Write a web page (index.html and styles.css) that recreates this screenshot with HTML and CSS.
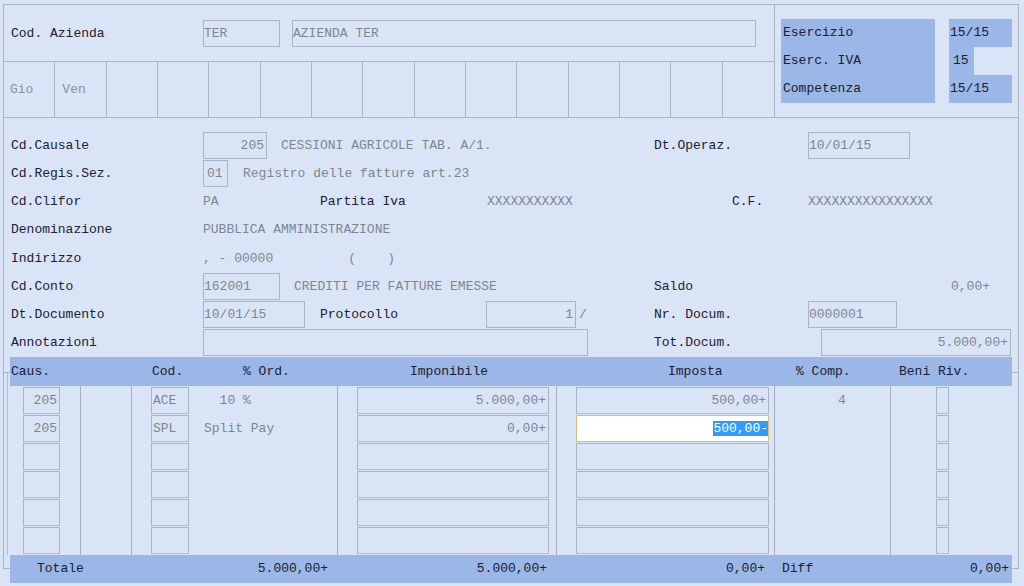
FILE: index.html
```html
<!DOCTYPE html>
<html lang="it">
<head>
<meta charset="utf-8">
<title>Registrazione</title>
<link rel="stylesheet" href="styles.css">
</head>
<body>
<div class="panel">
  <div class="top">
    <div class="top-left">
      <div class="az-row">
        <span class="lbl az-lbl">Cod. Azienda</span>
        <span class="field f-ter">TER</span>
        <span class="field f-azname">AZIENDA TER</span>
      </div>
      <div class="days">
        <div class="day">Gio</div><div class="day">Ven</div><div class="day"></div><div class="day"></div><div class="day"></div><div class="day"></div><div class="day"></div><div class="day"></div><div class="day"></div><div class="day"></div><div class="day"></div><div class="day"></div><div class="day"></div><div class="day"></div><div class="day"></div>
      </div>
    </div>
    <div class="top-right">
      <div class="es-grid">
        <div class="es-lbl">Esercizio</div><div class="es-val"><span class="vb">15/15</span></div>
        <div class="es-lbl">Eserc. IVA</div><div class="es-val"><span class="vb short">15</span></div>
        <div class="es-lbl">Competenza</div><div class="es-val"><span class="vb">15/15</span></div>
      </div>
    </div>
  </div>

  <div class="form">
    <!-- row 1 -->
    <div class="lbl">Cd.Causale</div>
    <div class="span3 line"><span class="field r w64">205</span><span class="val ml14">CESSIONI AGRICOLE TAB. A/1.</span></div>
    <div class="lbl span2">Dt.Operaz.</div>
    <div class="line"><span class="field w102">10/01/15</span></div>
    <!-- row 2 -->
    <div class="lbl">Cd.Regis.Sez.</div>
    <div class="span6 line"><span class="field w25">01</span><span class="val ml15">Registro delle fatture art.23</span></div>
    <!-- row 3 -->
    <div class="lbl">Cd.Clifor</div>
    <div class="val">PA</div>
    <div class="lbl">Partita Iva</div>
    <div class="val">XXXXXXXXXXX</div>
    <div></div>
    <div class="lbl">C.F.</div>
    <div class="val">XXXXXXXXXXXXXXXX</div>
    <!-- row 4 -->
    <div class="lbl">Denominazione</div>
    <div class="span6 val">PUBBLICA AMMINISTRAZIONE</div>
    <!-- row 5 -->
    <div class="lbl">Indirizzo</div>
    <div class="span6 val line"><span>, - 00000</span><span class="paren">(    )</span></div>
    <!-- row 6 -->
    <div class="lbl">Cd.Conto</div>
    <div class="span3 line"><span class="field w77">162001</span><span class="val ml14">CREDITI PER FATTURE EMESSE</span></div>
    <div class="lbl">Saldo</div>
    <div class="span2 val saldo">0,00+</div>
    <!-- row 7 -->
    <div class="lbl">Dt.Documento</div>
    <div class="line"><span class="field w102">10/01/15</span></div>
    <div class="lbl">Protocollo</div>
    <div class="line prot"><span class="field r w90">1</span><span class="val slash">/</span></div>
    <div class="lbl span2">Nr. Docum.</div>
    <div class="line"><span class="field w89">0000001</span></div>
    <!-- row 8 -->
    <div class="lbl">Annotazioni</div>
    <div class="span3 line"><span class="field w385"></span></div>
    <div class="lbl span2">Tot.Docum.</div>
    <div class="line"><span class="field r w190 ml13">5.000,00+</span></div>
  </div>

  <div class="table">
    <div class="thead">
      <span class="h-caus">Caus.</span>
      <span class="h-cod">Cod.</span>
      <span class="h-ord">% Ord.</span>
      <span class="h-imp">Imponibile</span>
      <span class="h-iva">Imposta</span>
      <span class="h-comp">% Comp.</span>
      <span class="h-beni">Beni Riv.</span>
    </div>
    <div class="tbody">
      <div class="col c1">
        <div class="cell r">205</div>
        <div class="cell r">205</div>
        <div class="cell"></div>
        <div class="cell"></div>
        <div class="cell"></div>
        <div class="cell"></div>
      </div>
      <div class="col c2"></div>
      <div class="col c3">
        <div class="slot"><div class="cell cod">ACE</div><span class="val ord">  10 %</span></div>
        <div class="slot"><div class="cell cod">SPL</div><span class="val ord">Split Pay</span></div>
        <div class="slot"><div class="cell cod"></div></div>
        <div class="slot"><div class="cell cod"></div></div>
        <div class="slot"><div class="cell cod"></div></div>
        <div class="slot"><div class="cell cod"></div></div>
      </div>
      <div class="col c4">
        <div class="cell r">5.000,00+</div>
        <div class="cell r">0,00+</div>
        <div class="cell"></div>
        <div class="cell"></div>
        <div class="cell"></div>
        <div class="cell"></div>
      </div>
      <div class="col c5">
        <div class="cell r">500,00+</div>
        <div class="cell r focus"><span class="sel">500,00-</span></div>
        <div class="cell"></div>
        <div class="cell"></div>
        <div class="cell"></div>
        <div class="cell"></div>
      </div>
      <div class="col c6">
        <div class="slot"><span class="val comp">4</span></div>
      </div>
      <div class="col c7">
        <div class="cell chk"></div>
        <div class="cell chk"></div>
        <div class="cell chk"></div>
        <div class="cell chk"></div>
        <div class="cell chk"></div>
        <div class="cell chk"></div>
      </div>
    </div>
    <div class="tfoot">
      <div class="ft1"><span>Totale</span><span>5.000,00+</span></div>
      <div class="ft2">5.000,00+</div>
      <div class="ft3">0,00+</div>
      <div class="ft4"><span>Diff</span><span>0,00+</span></div>
    </div>
  </div>
</div>
</body>
</html>
```

FILE: styles.css
```css
* { box-sizing: border-box; }

html, body {
  margin: 0;
  padding: 0;
  background: #d9e5f6;
}

body {
  font-family: "Liberation Mono", "Courier New", monospace;
  font-size: 13px;
  color: #1a2030;
  width: 1024px;
  height: 586px;
  overflow: hidden;
}

.panel {
  margin: 4px 0 0 3px;
  width: 1016px;
  border: 1px solid #a9b4c3;
}

/* ---------- top section ---------- */
.top {
  display: flex;
  border-bottom: 1px solid #a9b4c3;
  height: 113px;
}

.top-left {
  width: 770px;
  display: flex;
  flex-direction: column;
}

.az-row {
  height: 57px;
  border-bottom: 1px solid #a9b4c3;
  display: flex;
  align-items: center;
  padding-left: 7px;
}

.az-lbl { width: 192px; }

.days {
  flex: 1;
  display: grid;
  grid-template-columns: repeat(15, 1fr);
}

.day {
  border-right: 1px solid #a9b4c3;
  color: #8a9099;
  padding-left: 7px;
  line-height: 55px;
}

.day:first-child { margin-left: -1px; }
.day:last-child { border-right: none; }

.top-right {
  flex: 1;
  border-left: 1px solid #a9b4c3;
}

.es-grid {
  padding: 14px 0 0 6px;
  display: grid;
  grid-template-columns: 154px 63px;
  column-gap: 14px;
  grid-template-rows: 28px 28px 28px;
}

.es-lbl {
  background: #9bb7e7;
  padding-left: 2px;
  line-height: 28px;
}

.es-val { display: flex; }

.vb {
  display: block;
  width: 63px;
  background: #9bb7e7;
  padding-left: 1px;
  line-height: 28px;
}

.vb.short {
  width: 25px;
  padding-left: 4px;
}

/* ---------- form ---------- */
.form {
  padding: 13px 0 0 7px;
  display: grid;
  grid-template-columns: 192px 117px 167px 167px 78px 76px 1fr;
  grid-auto-rows: 28.25px;
  align-items: center;
}

.lbl { white-space: pre; }

.val {
  color: #7f858e;
  white-space: pre;
}

.span2 { grid-column: span 2; }
.span3 { grid-column: span 3; }
.span6 { grid-column: span 6; }

.line {
  display: flex;
  align-items: center;
}

.field {
  display: block;
  height: 27px;
  line-height: 25px;
  border: 1px solid #a9b4c3;
  color: #7f858e;
  padding: 0 2px 0 0;
  white-space: pre;
  flex: none;
}

.field.r { text-align: right; }

.w25 { width: 25px; padding-left: 3px; }
.w64 { width: 64px; }
.w77 { width: 77px; }
.w89 { width: 89px; }
.w90 { width: 90px; }
.w102 { width: 102px; }
.w190 { width: 190px; }
.w385 { width: 385px; }

.f-ter { width: 77px; }
.f-azname { width: 464px; margin-left: 12px; }

.ml13 { margin-left: 13px; }
.ml14 { margin-left: 14px; }
.ml15 { margin-left: 15px; }

.paren { margin-left: 75px; }

.saldo {
  text-align: right;
  padding-right: 28px;
}

.prot { margin-left: -1px; }
.slash { margin-left: 3px; }

/* ---------- table ---------- */
.table {
  background:
    linear-gradient(#a9b4c3, #a9b4c3) 0 15px / 100% 1px no-repeat,
    linear-gradient(#b3bdca, #b3bdca) 3px 15px / 1px 183px no-repeat;
}

.thead {
  margin: 0 6px;
  height: 29px;
  line-height: 29px;
  background: #9bb7e7;
  display: flex;
  padding-left: 1px;
  white-space: pre;
}

.h-caus { width: 141px; }
.h-cod { width: 91px; }
.h-ord { width: 167px; }
.h-imp { width: 258px; }
.h-iva { width: 128px; }
.h-comp { width: 103px; }
.h-beni { flex: 1; }

.tbody {
  margin: 0 6px;
  height: 169px;
  display: flex;
}

.col {
  border-right: 1px solid #a3adbc;
  padding-top: 1px;
}

.c1 { width: 71px; padding-left: 13px; }
.c2 { width: 51px; }
.c3 { width: 206px; padding-left: 19px; }
.c4 { width: 219px; padding-left: 19px; }
.c5 { width: 218px; padding-left: 19px; }
.c6 { width: 116px; }
.c7 { width: 121px; padding-left: 45px; border-right: none; }

.cell {
  height: 27px;
  margin-bottom: 1px;
  border: 1px solid #a9b4c3;
  border-bottom-color: #b3bcc8;
  line-height: 25px;
  color: #7f858e;
  padding: 0 2px 0 1px;
  white-space: pre;
}

.cell.r { text-align: right; }

.c1 .cell { width: 37px; }
.c4 .cell { width: 192px; }
.c5 .cell { width: 193px; }

.slot {
  height: 27px;
  margin-bottom: 1px;
  display: flex;
  align-items: center;
}

.cod {
  width: 38px;
  margin-bottom: 0;
  flex: none;
}

.ord { margin-left: 15px; }

.comp { margin-left: 63px; }

.chk {
  width: 13px;
  padding: 0;
}

.focus {
  background: #ffffff;
  border: 1px solid #e3b870;
  padding-right: 0;
}

.sel {
  background: #3399ff;
  color: #ffffff;
}

.tfoot {
  margin: 0 6px -15px 6px;
  height: 28px;
  line-height: 28px;
  background: #9bb7e7;
  display: flex;
  white-space: pre;
  position: relative;
}

.ft1 {
  width: 318px;
  padding-left: 27px;
  display: flex;
  justify-content: space-between;
}

.ft2 { width: 219px; text-align: right; }
.ft3 { width: 218px; text-align: right; }

.ft4 {
  flex: 1;
  padding: 0 3px 0 17px;
  display: flex;
  justify-content: space-between;
}
```
